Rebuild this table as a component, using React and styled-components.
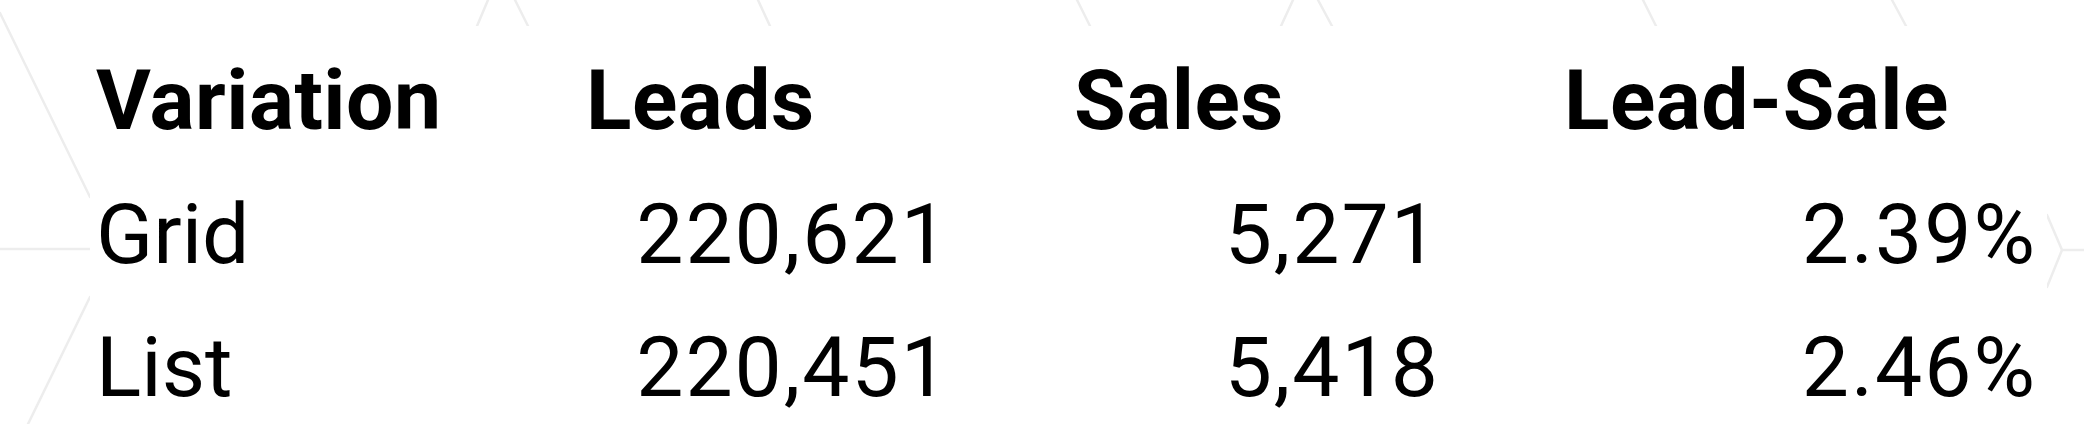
import React from "react"
import styled, { createGlobalStyle } from "styled-components"

const GlobalStyle = createGlobalStyle`
  html, body {
    margin: 0;
    padding: 0;
    background: #ffffff;
  }

  body {
    font-family: Roboto, "Liberation Sans", Arial, sans-serif;
    color: #000;
  }
`

const Page = styled.div`
  position: relative;
  width: 2084px;
  height: 424px;
  overflow: hidden;
  background: #fff;
`

const Backdrop = styled.svg`
  position: absolute;
  inset: 0;
  width: 100%;
  height: 100%;

  line {
    stroke: #ededed;
    stroke-width: 2.5;
    stroke-linecap: round;
  }
`

const Panel = styled.div`
  position: relative;
  width: 1957px;
  margin: 26px 0 0 90px;
  padding: 8px 10px 0 6px;
  box-sizing: border-box;
  height: 398px;
  background: #fff;
`

const Table = styled.div`
  display: grid;
  grid-template-columns: 490px 488px 490px 473px;
  grid-auto-rows: 133.5px;
  align-items: center;
  font-size: 84px;
  line-height: 133.5px;
`

const HeadCell = styled.div`
  font-weight: 700;
  letter-spacing: 0.5px;
  white-space: nowrap;
`

const NameCell = styled.div`
  font-weight: 400;
  white-space: nowrap;
`

const NumCell = styled.div`
  font-weight: 400;
  letter-spacing: 2px;
  text-align: right;
  white-space: nowrap;
  padding-right: ${(p) => p.$inset || 0}px;
`

const columns = [
  { title: "Variation" },
  { title: "Leads", inset: 124 },
  { title: "Sales", inset: 124 },
  { title: "Lead-Sale", inset: 0 },
]

const rows = [
  { name: "Grid", values: ["220,621", "5,271", "2.39%"] },
  { name: "List", values: ["220,451", "5,418", "2.46%"] },
]

const strokes = [
  [488, 0, 477, 26],
  [515, 0, 528, 26],
  [758, 0, 770, 26],
  [1077, 0, 1090, 26],
  [1293, 0, 1281, 26],
  [1318, 0, 1332, 26],
  [1643, 0, 1656, 26],
  [1892, 0, 1906, 26],
  [0, 13, 90, 197],
  [0, 249, 90, 249],
  [90, 297, 28, 424],
  [2047, 215, 2062, 250],
  [2062, 250, 2047, 287],
  [2062, 250, 2084, 250],
]

export default function App() {
  return (
    <Page>
      <GlobalStyle />
      <Backdrop viewBox="0 0 2084 424" preserveAspectRatio="none">
        {strokes.map(([x1, y1, x2, y2], i) => (
          <line key={i} x1={x1} y1={y1} x2={x2} y2={y2} />
        ))}
      </Backdrop>
      <Panel>
        <Table>
          {columns.map((c) => (
            <HeadCell key={c.title}>{c.title}</HeadCell>
          ))}
          {rows.map((r) => (
            <React.Fragment key={r.name}>
              <NameCell>{r.name}</NameCell>
              {r.values.map((v, i) => (
                <NumCell key={i} $inset={columns[i + 1].inset}>
                  {v}
                </NumCell>
              ))}
            </React.Fragment>
          ))}
        </Table>
      </Panel>
    </Page>
  )
}
